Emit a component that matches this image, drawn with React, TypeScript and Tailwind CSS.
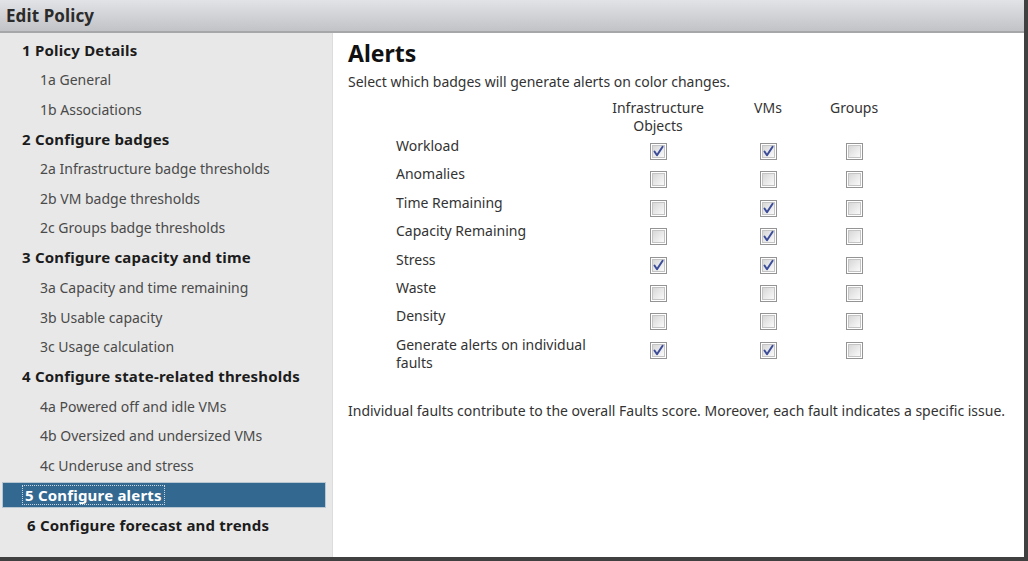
import React from "react";

const nav: { label: string; kind: "h" | "s" | "sel" | "h2" }[] = [
  { label: "1 Policy Details", kind: "h" },
  { label: "1a General", kind: "s" },
  { label: "1b Associations", kind: "s" },
  { label: "2 Configure badges", kind: "h" },
  { label: "2a Infrastructure badge thresholds", kind: "s" },
  { label: "2b VM badge thresholds", kind: "s" },
  { label: "2c Groups badge thresholds", kind: "s" },
  { label: "3 Configure capacity and time", kind: "h" },
  { label: "3a Capacity and time remaining", kind: "s" },
  { label: "3b Usable capacity", kind: "s" },
  { label: "3c Usage calculation", kind: "s" },
  { label: "4 Configure state-related thresholds", kind: "h" },
  { label: "4a Powered off and idle VMs", kind: "s" },
  { label: "4b Oversized and undersized VMs", kind: "s" },
  { label: "4c Underuse and stress", kind: "s" },
  { label: "5 Configure alerts", kind: "sel" },
  { label: "6 Configure forecast and trends", kind: "h2" },
];

const rows: { label: string[]; v: [boolean, boolean, boolean] }[] = [
  { label: ["Workload"], v: [true, true, false] },
  { label: ["Anomalies"], v: [false, false, false] },
  { label: ["Time Remaining"], v: [false, true, false] },
  { label: ["Capacity Remaining"], v: [false, true, false] },
  { label: ["Stress"], v: [true, true, false] },
  { label: ["Waste"], v: [false, false, false] },
  { label: ["Density"], v: [false, false, false] },
  { label: ["Generate alerts on individual", "faults"], v: [true, true, false] },
];

function Box({ checked }: { checked: boolean }) {
  return (
    <svg width="17" height="17" viewBox="0 0 17 17">
      <defs>
        <linearGradient id="cbg" x1="0" y1="0" x2="1" y2="1">
          <stop offset="0" stopColor="#d6d6d6" />
          <stop offset="1" stopColor="#fbfbfb" />
        </linearGradient>
      </defs>
      <rect x="0.5" y="0.5" width="16" height="16" fill="#ffffff" stroke="#949494" />
      <rect x="2.5" y="2.5" width="12" height="12" fill="url(#cbg)" stroke="#c4c4c4" />
      {checked && (
        <path d="M4.5 8.5 L7 12.2 L12.6 3.8" fill="none" stroke="#3b4c9a" strokeWidth="2" strokeLinecap="round" strokeLinejoin="round" />
      )}
    </svg>
  );
}

export default function App() {
  return (
    <div
      className="w-[1028px] h-[561px] overflow-hidden bg-white flex flex-col border-r-[4px] border-b-[4px] border-[#404040]"
      style={{ fontFamily: '"Noto Sans", "Open Sans", sans-serif' }}
    >
      <div className="h-[33px] shrink-0 flex items-center pl-[6px] bg-gradient-to-b from-[#e2e3e6] to-[#c2c3c6] border-b-[2px] border-[#a6a7a9]">
        <span className="text-[17px] font-bold text-[#2b2b2b] tracking-[0.1px]">Edit Policy</span>
      </div>
      <div className="flex flex-1 min-h-0">
        <div className="w-[333px] shrink-0 bg-[#e8e8e8] border-r border-[#dcdcdc] pt-[2px] pl-[2px] pr-[6px]">
          {nav.map((n, i) => {
            if (n.kind === "sel")
              return (
                <div key={i} className="h-[26px] my-[1.85px] flex items-center bg-[#336991] border border-[#b8c6d2] pl-[22px]">
                  <span className="text-[15px] tracking-[0.2px] font-bold text-white outline outline-1 outline-dotted outline-[#c8d4de] leading-[18px] px-[2px] -ml-[2px]">
                    {n.label}
                  </span>
                </div>
              );
            return (
              <div
                key={i}
                className={
                  "h-[29.7px] flex items-center " +
                  (n.kind === "h"
                    ? "pl-[20px] text-[15px] tracking-[0.2px] font-bold text-[#1c1c1c]"
                    : n.kind === "h2"
                    ? "pl-[25px] text-[15px] tracking-[0.2px] font-bold text-[#1c1c1c]"
                    : "pl-[38px] text-[14px] text-[#4a4a4a]")
                }
              >
                {n.label}
              </div>
            );
          })}
        </div>
        <div className="flex-1 pl-[15px] pt-[6px] text-[#333333]">
          <div className="text-[23px] font-bold text-[#111] leading-[28px]">Alerts</div>
          <div className="text-[14px] mt-[6px] leading-[18px]">Select which badges will generate alerts on color changes.</div>
          <div className="ml-[48px] mt-[8px] text-[14px]">
            <div className="flex h-[38px]">
              <div className="w-[214px]" />
              <div className="w-[96px] text-center leading-[18px]">
                Infrastructure
                <br />
                Objects
              </div>
              <div className="w-[124px] text-center leading-[18px]">VMs</div>
              <div className="w-[48px] text-center leading-[18px]">Groups</div>
            </div>
            {rows.map((r, i) => (
              <div key={i} className={"flex " + (r.label.length > 1 ? "h-[44px]" : "h-[28.4px]")}>
                <div className="w-[214px] leading-[18px]">
                  {r.label.map((l, j) => (
                    <div key={j}>{l}</div>
                  ))}
                </div>
                <div className="w-[96px] flex justify-center pt-[6px]">
                  <Box checked={r.v[0]} />
                </div>
                <div className="w-[124px] flex justify-center pt-[6px]">
                  <Box checked={r.v[1]} />
                </div>
                <div className="w-[48px] flex justify-center pt-[6px]">
                  <Box checked={r.v[2]} />
                </div>
              </div>
            ))}
          </div>
          <div className="text-[14px] mt-[22px] leading-[18px]">
            Individual faults contribute to the overall Faults score. Moreover, each fault indicates a specific issue.
          </div>
        </div>
      </div>
    </div>
  );
}
